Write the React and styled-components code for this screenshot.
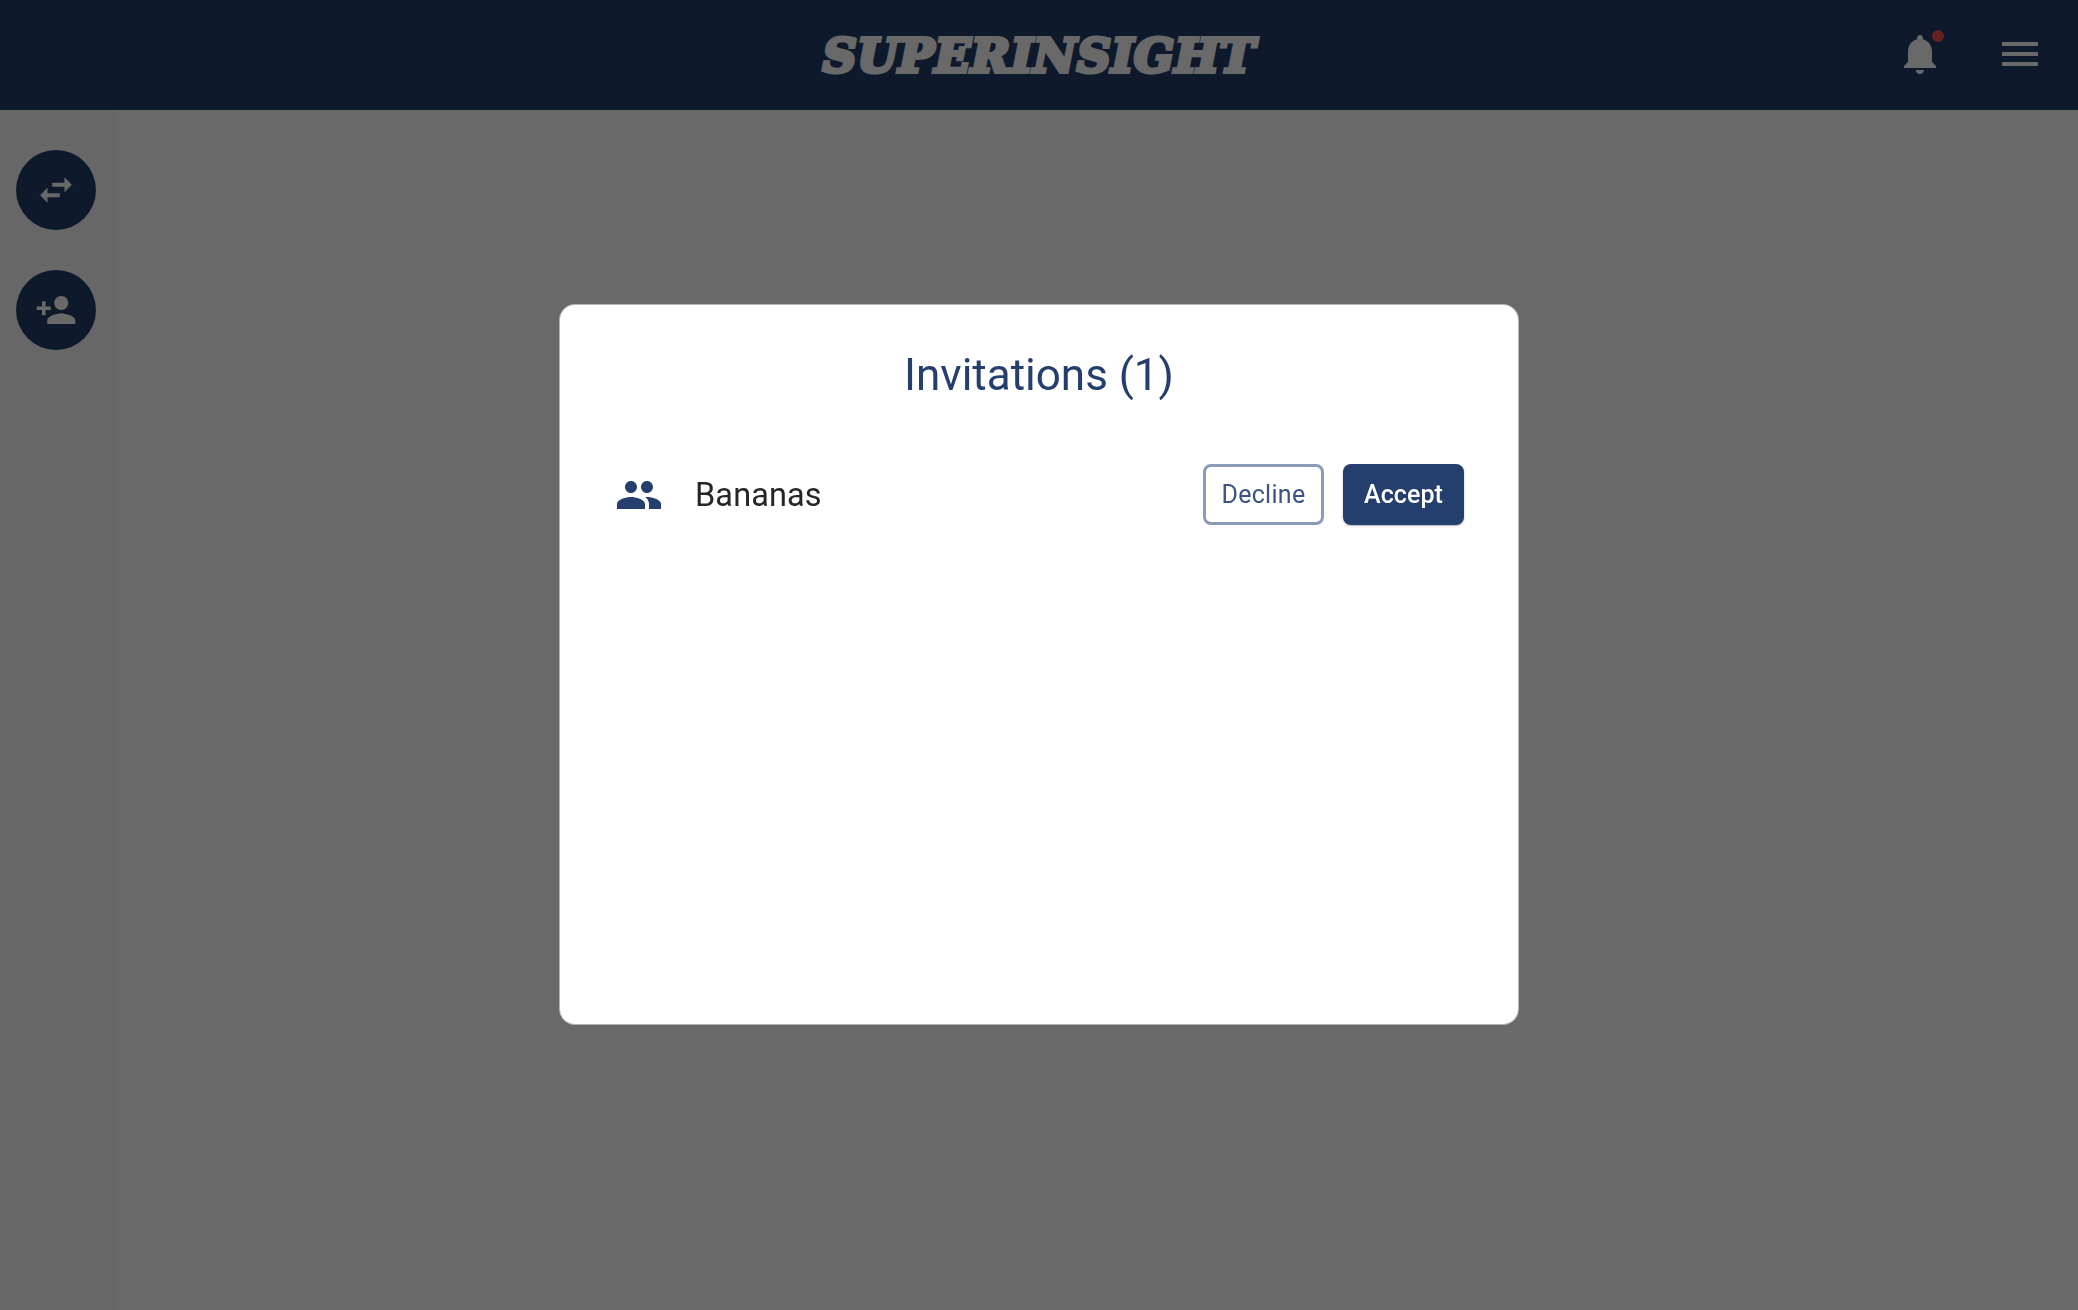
import React from "react";
import styled, { createGlobalStyle } from "styled-components";
import { MdNotifications, MdMenu, MdPersonAdd, MdPeople } from "react-icons/md";

const GlobalStyle = createGlobalStyle`
  * { box-sizing: border-box; }
  body {
    margin: 0;
    overflow: hidden;
    background: #fff;
    font-family: Roboto, "Liberation Sans", sans-serif;
  }
  svg { display: block; flex: none; }
`;

const Page = styled.div`
  height: 100vh;
  display: flex;
  flex-direction: column;
`;

const Header = styled.header`
  height: 110px;
  flex: none;
  display: grid;
  grid-template-columns: 1fr auto 1fr;
  align-items: center;
  padding: 0 34px 2px;
  background: #223f6b;
  color: #fff;
`;

const Logo = styled.div`
  grid-column: 2;
  font: italic bold 47px/60px "DejaVu Serif", serif;
  width: 440px;
  display: flex;
  justify-content: center;
  white-space: nowrap;
  padding-top: 3px;
`;

const LogoText = styled.span`
  letter-spacing: 0.6px;
  -webkit-text-stroke: 4px #fff;
`;

const Actions = styled.div`
  display: flex;
  justify-content: flex-end;
  gap: 52px;
`;

const IconButton = styled.button`
  position: relative;
  width: 48px;
  height: 48px;
  padding: 0;
  border: 0;
  background: none;
  color: #fff;
  font-size: 48px;
`;

const Badge = styled.span`
  position: absolute;
  top: 0;
  right: 0;
  width: 12px;
  height: 12px;
  border-radius: 50%;
  background: #f8504c;
`;

const Body = styled.div`
  flex: 1;
  display: flex;
`;

const Sidebar = styled.nav`
  width: 115px;
  display: flex;
  flex-direction: column;
  gap: 40px;
  padding: 40px 16px;
  background: #fafafa;
`;

const RoundButton = styled.button`
  width: 80px;
  height: 80px;
  display: flex;
  align-items: center;
  justify-content: center;
  padding: 0;
  border: 0;
  border-radius: 50%;
  background: #223f6b;
  color: #fff;
  font-size: 42px;
`;

const Backdrop = styled.div`
  position: fixed;
  inset: 0;
  display: flex;
  align-items: center;
  justify-content: center;
  padding-top: 19px;
  background: rgba(0, 0, 0, 0.588);
`;

const Dialog = styled.section`
  width: 958px;
  height: 719px;
  padding: 40px 54px;
  border-radius: 15px;
  background: #fff;
  box-shadow: 0 0 0 1px rgba(255, 255, 255, 0.5);
`;

const Title = styled.h2`
  margin: 0;
  text-align: center;
  font-size: 44px;
  line-height: 60px;
  font-weight: 400;
  color: #243e6e;
`;

const Invitation = styled.div`
  display: flex;
  align-items: center;
  margin-top: 59px;
  padding-left: 1px;
  height: 62px;
  color: #243e6e;
  font-size: 48px;
`;

const Name = styled.span`
  flex: 1;
  padding-left: 32px;
  font-size: 32.5px;
  line-height: 40px;
  padding-bottom: 1px;
  letter-spacing: 0.1px;
  color: #262626;
`;

const Button = styled.button`
  width: 121px;
  height: 61px;
  margin: 0 0 2px 19px;
  padding: 0;
  border: ${(p) => (p.$filled ? "0" : "3px solid #8b9ab8")};
  border-radius: 8px;
  background: ${(p) => (p.$filled ? "#243e6e" : "#fff")};
  color: ${(p) => (p.$filled ? "#fff" : "#3c5480")};
  box-shadow: ${(p) => (p.$filled ? "0 1px 2px rgba(0,0,0,0.3)" : "none")};
  font-family: inherit;
  font-size: 25px;
  font-weight: ${(p) => (p.$filled ? 500 : 400)};
  letter-spacing: ${(p) => (p.$filled ? "0.1px" : "0.3px")};
`;

const SwapIcon = () => (
  <svg
    viewBox="0 0 24 24"
    width="42"
    height="42"
    fill="currentColor"
    stroke="currentColor"
    strokeWidth="0.3"
  >
    <path d="M6.99 11L3.1 15l3.89 4v-3H14v-2H6.99v-3zM20.9 9l-3.89-4v3H10v2h7.01v3L20.9 9z" />
  </svg>
);

export default function App() {
  return (
    <>
      <GlobalStyle />
      <Page>
        <Header>
          <Logo>
            <LogoText>SUPERINSIGHT</LogoText>
          </Logo>
          <Actions>
            <IconButton aria-label="Notifications">
              <MdNotifications />
              <Badge />
            </IconButton>
            <IconButton aria-label="Menu">
              <MdMenu />
            </IconButton>
          </Actions>
        </Header>
        <Body>
          <Sidebar>
            <RoundButton aria-label="Switch">
              <SwapIcon />
            </RoundButton>
            <RoundButton aria-label="Invite">
              <MdPersonAdd />
            </RoundButton>
          </Sidebar>
        </Body>
      </Page>
      <Backdrop>
        <Dialog>
          <Title>Invitations (1)</Title>
          <Invitation>
            <MdPeople />
            <Name>Bananas</Name>
            <Button>Decline</Button>
            <Button $filled>Accept</Button>
          </Invitation>
        </Dialog>
      </Backdrop>
    </>
  );
}
